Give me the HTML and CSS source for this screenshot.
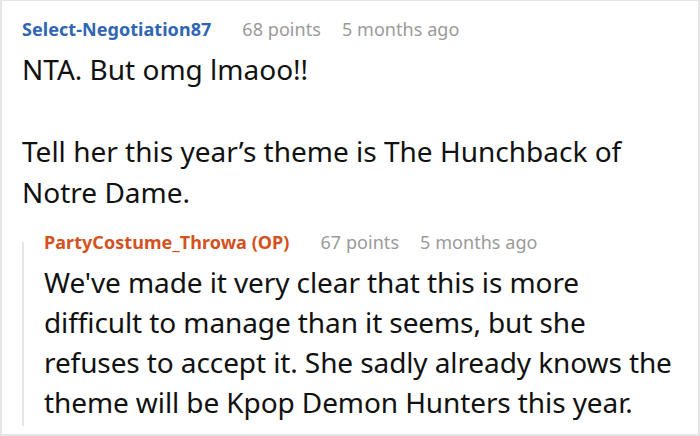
FILE: index.html
```html
<!DOCTYPE html>
<html lang="en">
<head>
<meta charset="utf-8">
<title>Comments</title>
<link rel="stylesheet" href="styles.css">
</head>
<body>
<div class="thread">
  <div class="comment">
    <div class="meta">
      <span class="author">Select-Negotiation87</span>
      <span class="points">68 points</span>
      <span class="time">5 months ago</span>
    </div>
    <div class="text">
      <p>NTA. But omg lmaoo!!</p>
      <p>Tell her this year’s theme is The Hunchback of Notre Dame.</p>
    </div>
  </div>
  <div class="reply">
    <div class="meta">
      <span class="author op">PartyCostume_Throwa (OP)</span>
      <span class="points">67 points</span>
      <span class="time">5 months ago</span>
    </div>
    <div class="text reply-text">
      <p>We've made it very clear that this is more difficult to manage than it seems, but she refuses to accept it. She sadly already knows the theme will be Kpop Demon Hunters this year.</p>
    </div>
  </div>
</div>
</body>
</html>
```

FILE: styles.css
```css
html, body {
  margin: 0;
  padding: 0;
  background: #ffffff;
}

body {
  font-family: "Noto Sans", "Open Sans", sans-serif;
  color: #111111;
}

/* outer card */
.thread {
  box-sizing: border-box;
  width: 700px;
  height: 436px;
  overflow: hidden;
  padding: 16px 18px 0 20px;
  border: 2px solid #e6e6e6;
  border-top-width: 1px;
}

/* author / points / age line */
.meta {
  display: flex;
  align-items: baseline;
  font-size: 18px;
  line-height: 24px;
  letter-spacing: 0.05px;
  white-space: nowrap;
}

.author {
  font-weight: 700;
  color: #2f65b3;
  margin-right: 31px;
}

.author.op {
  color: #d4521d;
}

.points {
  color: #9a9a9a;
  margin-right: 21px;
}

.time {
  color: #9a9a9a;
}

/* comment body */
.text {
  margin-top: 8px;
  font-size: 28px;
  line-height: 41px;
}

.text p {
  margin: 0 0 41px 0;
}

.text p:last-child {
  margin-bottom: 0;
}

/* nested reply with its thread line */
.reply {
  position: relative;
  margin-top: 17px;
  padding-left: 22px;
  padding-bottom: 4px;
}

.reply::before {
  content: "";
  position: absolute;
  left: 0;
  top: 12px;
  bottom: 0;
  width: 2px;
  background: #e6e6e6;
}

.reply-text {
  line-height: 40px;
  letter-spacing: -0.1px;
}
```
